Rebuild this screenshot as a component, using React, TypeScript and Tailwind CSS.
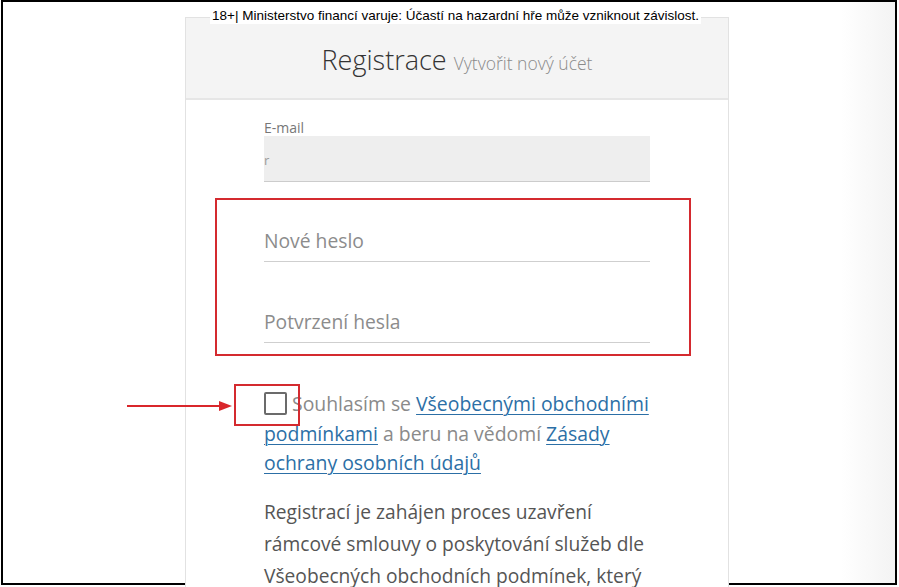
import React from 'react';

const sans = "font-['Open_Sans',sans-serif]";

function ArrowMark() {
  return (
    <svg
      className="absolute left-[122px] top-[397px]"
      width="110"
      height="14"
      viewBox="0 0 110 14"
    >
      <line x1="2" y1="7" x2="96" y2="7" stroke="#d9262b" strokeWidth="2" />
      <polygon points="94,2 107,7 94,12" fill="#d9262b" />
    </svg>
  );
}

function LineField({ placeholder }: { placeholder: string }) {
  return (
    <div className="h-[40px] flex items-end border-b border-[#cfcfcf]">
      <span className="text-[19.3px] leading-[30px] pb-[5px] text-[#8c8c8c]">{placeholder}</span>
    </div>
  );
}

function Link({ children }: { children: React.ReactNode }) {
  return (
    <a href="#" className="text-[#2c6fa6] underline underline-offset-[3px] decoration-1">
      {children}
    </a>
  );
}

export default function App() {
  return (
    <div className={`relative w-[899px] h-[587px] overflow-hidden bg-white ${sans}`}>
      <div className="relative h-[585px] ml-[1px] mr-[2px] border-2 border-black bg-gradient-to-r from-white from-[94%] to-[#f3f3f3]">
        <div className="ml-[182px] mt-[15px] w-[544px] h-[600px] border-x border-t border-[#e2e2e2] bg-white">
          <div className="h-[82px] bg-[#f4f4f4] border-b-2 border-[#e6e6e6] flex items-center justify-center pt-[5px] gap-[7px]">
            <span className="text-[27px] font-light text-[#333]">Registrace</span>
            <span className="text-[17.5px] font-light text-[#8a8a8a] pt-[6px]">Vytvořit nový účet</span>
          </div>

          <div className="px-[78px] pt-[19px]">
            <div className="text-[14px] leading-[17px] text-[#777]">E-mail</div>
            <div className="h-[46px] bg-[#eeeeee] border-b border-[#cccccc] flex items-center">
              <span className="text-[13px] text-[#9a9a9a] pt-[4px]">r</span>
            </div>

            <div className="mt-[40px]">
              <LineField placeholder="Nové heslo" />
            </div>
            <div className="mt-[41px]">
              <LineField placeholder="Potvrzení hesla" />
            </div>

            <p className="mt-[46px] text-[19.4px] leading-[29.5px] text-[#8a8a8a]">
              <span className="inline-block align-[-4px] w-[23px] h-[23px] mr-[5px] border-2 border-[#6b6b6b] rounded-[2px]" />
              Souhlasím se <Link>Všeobecnými obchodními podmínkami</Link> a beru na vědomí{' '}
              <Link>Zásady ochrany osobních údajů</Link>
            </p>

            <p className="mt-[18px] text-[19.2px] leading-[32px] text-[#555]">
              Registrací je zahájen proces uzavření rámcové smlouvy o poskytování služeb dle
              Všeobecných obchodních podmínek, který
            </p>
          </div>
        </div>

        {/* annotation overlays */}
        <div className="absolute left-[212px] top-[196px] w-[476px] h-[158px] border-2 border-[#d42a2f]" />
        <div className="absolute left-[231px] top-[382px] w-[66px] h-[42px] border-2 border-[#d42a2f]" />
        <ArrowMark />

        <div className="absolute top-[6px] left-[207px] bg-white px-[2px] font-['Liberation_Sans',Arial,sans-serif] text-[13.5px] leading-[16px] text-black">
          18+| Ministerstvo financí varuje: Účastí na hazardní hře může vzniknout závislost.
        </div>
      </div>
    </div>
  );
}
